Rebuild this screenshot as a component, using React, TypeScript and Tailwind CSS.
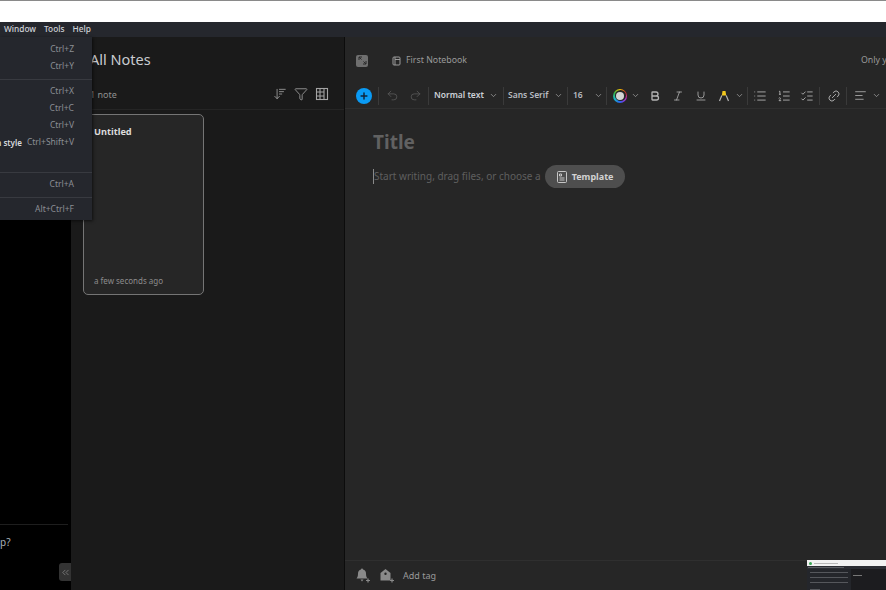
import { ArrowDownWideNarrow, Bold, ChevronDown, ChevronsLeft, Funnel, Italic, Link2, List, ListChecks, ListOrdered, AlignLeft, Plus, Redo2, Underline, Undo2 } from "lucide-react";
import type { ReactNode } from "react";

const FONT = "font-['Noto_Sans','Open_Sans',sans-serif]";

const Sep = ({ className = "" }: { className?: string }) => <div className={`h-[18px] w-px bg-[#3a3a3a] ${className}`} />;

const Chevron = ({ className = "" }: { className?: string }) => (
  <div className={`flex w-2 shrink-0 justify-center text-[#a0a0a0] ${className}`}>
    <ChevronDown size={9} strokeWidth={2} className="shrink-0" />
  </div>
);

const Slot = ({ w, children }: { w: string; children: ReactNode }) => (
  <div className={`flex shrink-0 items-center justify-center text-[#b4b4b4] ${w}`}>{children}</div>
);

const menuRows = [
  { keys: "Ctrl+Z" },
  { keys: "Ctrl+Y", line: true },
  { keys: "Ctrl+X" },
  { keys: "Ctrl+C" },
  { keys: "Ctrl+V" },
  { keys: "Ctrl+Shift+V", label: "n style" },
  { keys: "", line: true },
  { keys: "Ctrl+A", line: true },
  { keys: "Alt+Ctrl+F" },
];

const EditMenu = () => (
  <div className="absolute left-0 top-[37px] z-20 flex h-[183px] w-[92px] flex-col bg-[#25272d] pr-[18px] pt-[4px] shadow-[1px_1px_3px_rgba(0,0,0,0.6)]">
    {menuRows.map((row, i) => (
      <div key={i}>
        <div className="flex h-[17px] items-center justify-end whitespace-nowrap text-[8.5px] text-[#8b8e94]">
          {row.label && <span className="mr-[5px] text-[8px] font-semibold text-[#d8dade]">{row.label}</span>}
          {row.keys}
        </div>
        {row.line && <div className="my-[3.5px] -mr-[18px] h-px bg-[#383a40]" />}
      </div>
    ))}
  </div>
);

const NotesList = () => (
  <div className="flex w-[273px] shrink-0 flex-col bg-[#1a1a1a]">
    <div className="flex h-[73px] flex-col border-b border-[#252525] pl-[19px] pr-[15px]">
      <div className="mt-[11px] text-[14.5px] leading-[22px] text-[#c9ccd1]">All Notes</div>
      <div className="mt-[16px] flex items-center justify-between">
        <span className="pt-[2px] text-[9px] text-[#8f8f8f]">1 note</span>
        <div className="flex items-center gap-[7px] text-[#a4a4a4]">
          <ArrowDownWideNarrow size={14} strokeWidth={1.4} />
          <Funnel size={14} strokeWidth={1.4} />
          <svg width="14" height="14" viewBox="0 0 14 14" fill="none" stroke="currentColor" strokeWidth="1.1">
            <rect x="1.5" y="1.5" width="11" height="11" />
            <path d="M5 1.500v11M9 1.500v11M1.500 5h7.500M1.500 9h7.500" />
          </svg>
        </div>
      </div>
    </div>
    <div className="ml-[12px] mt-[4px] flex h-[181px] w-[121px] flex-col justify-between rounded-[5px] border-[1.5px] border-[#757575] bg-[#262626] pb-[7px] pl-[10px] pt-[10px]">
      <div className="text-[9.2px] font-bold text-[#dcdcdc]">Untitled</div>
      <div className="text-[8px] text-[#8c8c8c]">a few seconds ago</div>
    </div>
  </div>
);

const Toolbar = () => (
  <div className="flex h-[37px] items-center border-b border-[#2f2f2f] pl-[11px] pt-[11px]">
    <div className="flex h-4 w-4 shrink-0 items-center justify-center rounded-full bg-[#0a9bf5] text-[#10243a]">
      <Plus size={10} strokeWidth={3.5} />
    </div>
    <Sep className="ml-[6px]" />
    <Slot w="w-6 ml-px"><Undo2 size={13} strokeWidth={1.4} className="text-[#5c5c5c]" /></Slot>
    <Slot w="w-[22px]"><Redo2 size={13} strokeWidth={1.4} className="text-[#5c5c5c]" /></Slot>
    <Sep className="ml-[2px]" />
    <span className="ml-[5px] w-[50px] shrink-0 whitespace-nowrap text-[8.5px] font-semibold text-[#ccd0d6]">Normal text</span>
    <Chevron className="ml-[5px]" />
    <Sep className="ml-[6px]" />
    <span className="ml-[4px] w-[42px] shrink-0 whitespace-nowrap text-[8.5px] font-semibold text-[#b8bcc2]">Sans Serif</span>
    <Chevron className="ml-[4px]" />
    <Sep className="ml-[5px]" />
    <span className="ml-[5px] w-[10px] shrink-0 text-[8.5px] font-semibold text-[#b8bcc2]">16</span>
    <Chevron className="ml-[11px]" />
    <Sep className="ml-[4px]" />
    <div className="ml-[6px] flex h-[14px] w-[14px] shrink-0 items-center justify-center rounded-full bg-[conic-gradient(#f5c400,#e8262a,#b32fd0,#2b5ff0,#18b8c8,#37b24a,#f5c400)]">
      <div className="h-[11px] w-[11px] rounded-full bg-[#262626] p-[1.5px]">
        <div className="h-full w-full rounded-full bg-[#d4d4d4]" />
      </div>
    </div>
    <Chevron className="ml-[4px]" />
    <Slot w="w-[23px] ml-[4px]"><Bold size={12} strokeWidth={2.6} /></Slot>
    <Slot w="w-[23px]"><Italic size={12} strokeWidth={1.6} /></Slot>
    <Slot w="w-[23px]"><Underline size={12} strokeWidth={1.6} /></Slot>
    <Slot w="w-[23px]">
      <svg width="12" height="12" viewBox="0 0 12 12" fill="none">
        <path d="M4.500 1h3l.7 4.500H3.800z" fill="#f2c81e" />
        <path d="M3.800 5.500 1.500 11M8.200 5.500l2.300 5.500" stroke="#b4b4b4" strokeWidth="1.200" />
      </svg>
    </Slot>
    <Chevron />
    <Sep className="ml-[4px]" />
    <Slot w="w-6"><List size={14} strokeWidth={1.5} /></Slot>
    <Slot w="w-[23px]"><ListOrdered size={14} strokeWidth={1.5} /></Slot>
    <Slot w="w-[23px]"><ListChecks size={14} strokeWidth={1.5} /></Slot>
    <Sep className="ml-px" />
    <Slot w="w-[23px] ml-[2px]"><Link2 size={14} strokeWidth={1.5} className="-rotate-45" /></Slot>
    <Sep className="ml-px" />
    <Slot w="w-6 ml-px"><AlignLeft size={13} strokeWidth={1.5} /></Slot>
    <Chevron />
  </div>
);

const Editor = () => (
  <div className="flex min-w-0 flex-1 flex-col overflow-hidden border-l border-[#0c0c0c] bg-[#262626]">
    <div className="flex h-[35px] shrink-0 items-center whitespace-nowrap pl-[11px] pt-[12px] text-[8.8px] text-[#9a9a9a]">
      <div className="flex h-3 w-3 shrink-0 items-center justify-center rounded-[2px] bg-[#6f6f6f] text-[#2a2a2a]">
        <svg width="9" height="9" viewBox="0 0 9 9" fill="none" stroke="currentColor" strokeWidth="1">
          <path d="M1 4V1h3M1 1l2.500 2.500M8 5v3H5M8 8 5.500 5.500" />
        </svg>
      </div>
      <Sep className="ml-[13px] !h-[14px]" />
      <svg className="ml-[11px] shrink-0" width="9" height="10" viewBox="0 0 9 10" fill="none" stroke="#9a9a9a" strokeWidth="1">
        <rect x="1" y="1" width="7" height="8" rx="1" />
        <path d="M3 1v8M3 3.500h5" />
      </svg>
      <span className="ml-[5px] w-[61px] shrink-0">First Notebook</span>
      <span className="ml-[394px]">Only you</span>
    </div>
    <Toolbar />
    <div className="flex-1 pl-[28px]">
      <div className="mt-[20px] text-[19px] font-bold leading-[27px] text-[#616161]">Title</div>
      <div className="mt-[9px] flex items-center whitespace-nowrap">
        <div className="h-[15px] w-px bg-[#8a8a8a]" />
        <span className="text-[10px] text-[#5f5f5f]">Start writing, drag files, or choose a</span>
        <div className="ml-[4px] flex h-[23px] w-[80px] shrink-0 items-center rounded-full bg-[#4e4e4e] pl-[12px] text-[9px] font-bold text-[#d2d2d2]">
          <svg width="10" height="12" viewBox="0 0 10 12" fill="none" stroke="#d2d2d2" strokeWidth="0.9">
            <rect x="0.5" y="0.5" width="9" height="11" rx="1" />
            <path d="M2.500 3h2v2h-2zM2.500 7h5M2.500 9h5" />
          </svg>
          <span className="ml-[5px]">Template</span>
        </div>
      </div>
    </div>
    <div className="flex h-[30px] shrink-0 items-center gap-[9px] border-t border-[#2f2f2f] pl-[10px] text-[#8a8a8a]">
      <svg width="15" height="15" viewBox="0 0 15 15" fill="currentColor">
        <path d="M6 1.500a1 1 0 0 1 2 0c2 .5 3 2 3 4 0 2.500.5 3.500 1.500 5h-11C2.500 9 3 8 3 5.500c0-2 1-3.500 3-4z" />
        <path d="M5.500 11.500h3L7 13.500z" />
        <path d="M11 12.500h4M13 10.500v4" stroke="currentColor" strokeWidth="1.200" />
      </svg>
      <svg width="15" height="15" viewBox="0 0 15 15" fill="currentColor">
        <path fillRule="evenodd" d="M6.500 1 11.500 5v7.500h-10V5zM6.500 4.500a1.200 1.200 0 1 0 0 2.400 1.200 1.200 0 0 0 0-2.400z" />
        <path d="M11 12.500h4M13 10.500v4" stroke="currentColor" strokeWidth="1.200" />
      </svg>
      <span className="text-[9px] text-[#9a9a9a]">Add tag</span>
    </div>
  </div>
);

// tiny picture-in-picture of the screenshot tool, bottom right
const Thumbnail = () => (
  <div className="absolute bottom-0 left-[807px] z-20 flex h-[30px] w-[79px] flex-col bg-[#1c1c1f]">
    <div className="flex h-[6px] items-center gap-[2px] bg-[#f2f2f2] pl-[2px]">
      <div className="h-[3px] w-[3px] rounded-full bg-[#3aa655]" />
      <div className="h-px w-[24px] bg-[#b8b8b8]" />
    </div>
    <div className="flex h-[3px] items-center bg-[#2b2d33] pl-px">
      <div className="h-px w-[36px] bg-[#5c5e63]" />
    </div>
    <div className="flex flex-1 gap-[2px]">
      <div className="flex w-[44px] flex-col gap-[4px] bg-[#24262b] px-[3px] pt-[3px]">
        <div className="h-px w-full bg-[#55575c]" />
        <div className="h-px w-full bg-[#55575c]" />
        <div className="h-px w-full bg-[#55575c]" />
        <div className="mt-[2px] h-px w-[10px] bg-[#55575c]" />
      </div>
      <div className="mt-[6px] h-px w-[9px] bg-[#777777]" />
    </div>
  </div>
);

export default function App() {
  return (
    <div className={`relative flex h-[590px] w-[886px] flex-col overflow-hidden bg-black ${FONT}`}>
      <div className="h-[22px] shrink-0 border-t border-[#8a8a8a] bg-white" />
      <div className="flex h-[15px] shrink-0 items-center gap-[8px] bg-[#25272d] pl-[4px] text-[8.3px] font-medium text-[#cfd2d8]">
        <span>Window</span>
        <span>Tools</span>
        <span>Help</span>
      </div>
      <div className="flex min-h-0 flex-1">
        <div className="flex w-[71px] shrink-0 flex-col items-end bg-black">
          <div className="mt-[487px] h-px w-[68px] self-start bg-[#1e1e1e]" />
          <div className="mt-[10px] self-start text-[10px] leading-[14px] text-[#a8b0b8]">p?</div>
          <div className="mt-[14px] flex h-[18px] w-3 items-center justify-center rounded-l-[3px] bg-[#333333] text-[#7a7a7a]">
            <ChevronsLeft size={11} strokeWidth={2} />
          </div>
        </div>
        <NotesList />
        <Editor />
      </div>
      <EditMenu />
      <Thumbnail />
    </div>
  );
}
